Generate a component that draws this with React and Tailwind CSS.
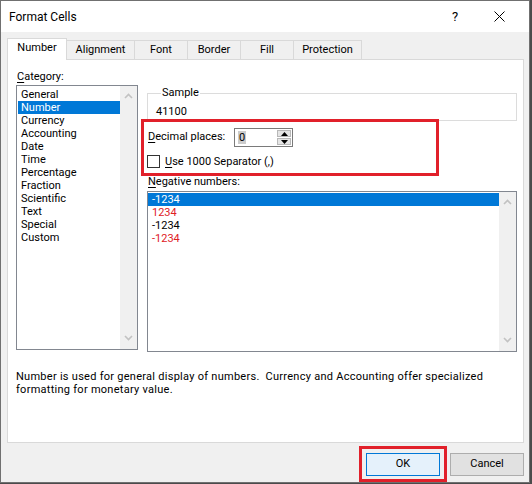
import React from "react"

const categories = ["General", "Number", "Currency", "Accounting", "Date", "Time", "Percentage", "Fraction", "Scientific", "Text", "Special", "Custom"]

const negatives = [
  { label: "-1234", red: false, selected: true },
  { label: "1234", red: true },
  { label: "-1234", red: false },
  { label: "-1234", red: true },
]

const tabs = [
  { label: "Alignment", w: "w-[68px]" },
  { label: "Font", w: "w-[53px]" },
  { label: "Border", w: "w-[53px]" },
  { label: "Fill", w: "w-[53px]" },
  { label: "Protection", w: "w-[68px]" },
]

function Chevron({ up }) {
  return (
    <svg width="9" height="6" viewBox="0 0 9 6">
      <path d={up ? "M1 5 L4.5 1.5 L8 5" : "M1 1 L4.5 4.5 L8 1"} stroke="#c2c2c2" strokeWidth="1.6" fill="none" />
    </svg>
  )
}

function Scrollbar() {
  return (
    <div className="w-[17px] h-full shrink-0 bg-[#f0f0f0] flex flex-col items-center justify-between pt-[7px] pb-[8px]">
      <Chevron up />
      <Chevron />
    </div>
  )
}

export default function App() {
  return (
    <div className="w-[532px] h-[484px] bg-[#4b4b4b] font-['Segoe_UI','Roboto',sans-serif] text-[11px] text-black">
      <div className="w-[530px] h-[483px] border border-[#707070] flex flex-col bg-[#f0f0f0]">

        {/* title bar */}
        <div className="h-[31px] bg-white flex items-center justify-between pl-[8px] pr-[8px] shrink-0">
          <span className="text-[12px]">Format Cells</span>
          <div className="flex items-center">
            <span className="w-[44px] text-center text-[13px]">?</span>
            <span className="w-[44px] flex justify-center">
              <svg width="11" height="11" viewBox="0 0 11 11">
                <path d="M0.5 0.5 L10.5 10.5 M10.5 0.5 L0.5 10.5" stroke="#000" strokeWidth="1" />
              </svg>
            </span>
          </div>
        </div>

        <div className="flex-1 flex flex-col pl-[6px] pr-[5px] pt-[6px]">
          {/* tabs */}
          <div className="flex items-end h-[21px]">
            <div className="relative z-10 w-[60px] h-[22px] -mb-px bg-white border border-b-0 border-[#d9d9d9] flex items-center justify-center pb-[2px]">
              Number
            </div>
            {tabs.map((t) => (
              <div key={t.label} className={`${t.w} h-[19px] border-t border-r border-[#d9d9d9] flex items-center justify-center`}>
                {t.label}
              </div>
            ))}
          </div>

          {/* panel */}
          <div className="h-[384px] bg-white border border-[#d9d9d9] flex flex-col">
            <div className="flex gap-[9px] pl-[8px] pt-[10px]">
              {/* category */}
              <div className="w-[122px] flex flex-col">
                <div className="leading-[13px] pl-px"><u className="underline-offset-2">C</u>ategory:</div>
                <div className="mt-[2px] h-[265px] border border-[#828790] flex">
                  <div className="flex-1 pt-[2px] pl-px">
                    {categories.map((c) => (
                      <div key={c} className={`h-[13px] leading-[13px] pl-[3px] ${c === "Number" ? "bg-[#0078d7] text-white" : ""}`}>
                        {c}
                      </div>
                    ))}
                  </div>
                  <Scrollbar />
                </div>
              </div>

              {/* right side */}
              <div className="w-[370px] flex flex-col pt-[16px]">
                <fieldset className="border border-[#dcdcdc] pl-[8px] pt-[5px] pb-[2px]">
                  <legend className="ml-[5px] px-px leading-[14px]">Sample</legend>
                  <div className="leading-[13px]">41100</div>
                </fieldset>

                <div className="relative w-[292px] mt-[7px]">
                  <div className="flex items-center h-[19px]">
                    <span className="w-[87px] pl-px whitespace-nowrap"><u className="underline-offset-2">D</u>ecimal places:</span>
                    <div className="w-[59px] h-[19px] border border-[#7a7a7a] bg-white flex">
                      <div className="flex-1 flex items-center pl-[3px]">
                        <span className="bg-[#cccccc] leading-[13px] px-px">0</span>
                      </div>
                      <div className="w-[16px] flex flex-col gap-px p-px">
                        <div className="flex-1 bg-[#e5e5e5] border border-[#b8b8b8] flex items-center justify-center">
                          <svg width="7" height="4" viewBox="0 0 7 4"><path d="M3.5 0 L7 4 L0 4 Z" fill="#000" /></svg>
                        </div>
                        <div className="flex-1 bg-[#e5e5e5] border border-[#b8b8b8] flex items-center justify-center">
                          <svg width="7" height="4" viewBox="0 0 7 4"><path d="M0 0 L7 0 L3.5 4 Z" fill="#000" /></svg>
                        </div>
                      </div>
                    </div>
                  </div>
                  <div className="flex items-center h-[13px] mt-[8px]">
                    <span className="w-[13px] h-[13px] border border-[#333333] bg-white shrink-0" />
                    <span className="ml-[5px] leading-[13px] whitespace-nowrap"><u className="underline-offset-2">U</u>se 1000 Separator (,)</span>
                  </div>
                  {/* red highlight box */}
                  <div className="absolute -left-[6px] -top-[9px] -bottom-[8px] right-0 border-[3px] border-[#e1202a] pointer-events-none" />
                </div>

                <div className="mt-[7px] leading-[13px] pl-px"><u className="underline-offset-2">N</u>egative numbers:</div>
                <div className="mt-[3px] h-[161px] border border-[#828790] flex">
                  <div className="flex-1 pt-px">
                    {negatives.map((n, i) => (
                      <div
                        key={i}
                        className={`h-[13px] leading-[13px] pl-[4px] ${n.selected ? "bg-[#0078d7] text-white" : n.red ? "text-[#e0201f]" : "text-black"}`}
                      >
                        {n.label}
                      </div>
                    ))}
                  </div>
                  <Scrollbar />
                </div>
              </div>
            </div>

            <div className="mt-[18px] pl-[8px] leading-[13px] tracking-[0.27px] whitespace-nowrap">
              Number is used for general display of numbers.&nbsp; Currency and Accounting offer specialized
              <br />
              formatting for monetary value.
            </div>
          </div>

          {/* buttons */}
          <div className="flex justify-end gap-[10px] mt-[10px]">
            <div className="relative">
              <div className="w-[74px] h-[23px] bg-[#e5f1fb] border border-[#0078d7] flex items-center justify-center">OK</div>
              <div className="absolute -left-[7px] -right-[7px] -top-[7px] -bottom-[6px] border-[3px] border-[#e1202a] pointer-events-none" />
            </div>
            <div className="w-[74px] h-[23px] bg-[#e1e1e1] border border-[#adadad] flex items-center justify-center">Cancel</div>
          </div>
        </div>
      </div>
    </div>
  )
}
